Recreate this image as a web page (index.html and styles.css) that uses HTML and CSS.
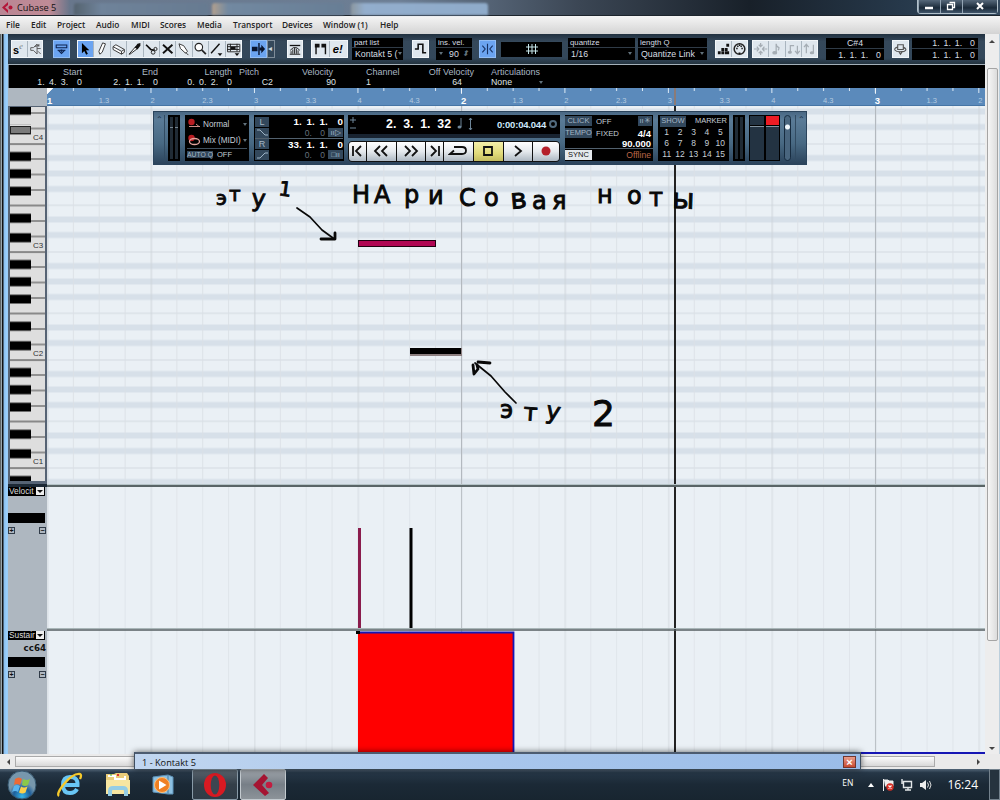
FILE: index.html
```html
<!DOCTYPE html>
<html lang="en">
<head>
    <meta charset="UTF-8">
    <title>Cubase 5</title>
    <link rel="stylesheet" href="styles.css">
</head>
<body>
<div class="desktop">
    <header class="titlebar">
        <div class="app-name">
            <svg width="13" height="13" viewBox="0 0 13 13"><path d="M7 1L1 6.500L7 12L7 9L4 6.500L7 4Z" fill="#b31538"/><circle cx="9.500" cy="6.500" r="2" fill="#b31538"/></svg>
            <span>Cubase 5</span>
        </div>
        <div class="glass-tab tab-a"></div>
        <div class="glass-tab tab-b"></div>
        <div class="glass-tab tab-c"></div>
        <div class="win-buttons">
            <span><svg width="10" height="12"><path d="M1 8h8" stroke="#fff" stroke-width="2.500"/></svg></span>
            <span><svg width="10" height="12"><path d="M3.500 2.500h5v5h-2M1.500 4.500h5v5h-5z" fill="none" stroke="#fff" stroke-width="1.300"/></svg></span>
            <span><svg width="10" height="12"><path d="M2 3l6 6M8 3l-6 6" stroke="#fff" stroke-width="2"/></svg></span>
        </div>
    </header>

    <nav class="menu">
        <span>File</span><span>Edit</span><span>Project</span><span>Audio</span><span>MIDI</span><span>Scores</span><span>Media</span><span>Transport</span><span>Devices</span><span>Window (1)</span><span>Help</span>
    </nav>

    <div class="workspace">
        <div class="frame-left"></div>
        <main class="editor">
            <div class="toolbar">
                <div class="group g-solo">
                    <svg viewBox="0 0 16 17"><text x="1" y="14" class="ico-s">s</text><text x="8" y="8" class="ico-e">e</text></svg>
                    <svg viewBox="0 0 16 17"><path d="M3 7h3l4-4v11l-4-4H3zM11 3l1 3M10 8h4M11 11l3 3M7 6l6-2" fill="none" stroke="#555"/></svg>
                </div>
                <div class="group g-info on">
                    <svg viewBox="0 0 17 17"><path d="M2.500 4h12v3h-12zM4 10h9M5 10l3.500 3.500l3.500-3.500" fill="none" stroke="#0d2350" stroke-width="1.200"/><circle cx="8.500" cy="10.500" r="1.300" fill="#0d2350"/></svg>
                </div>
                <div class="group g-tools">
                    <svg class="on" viewBox="0 0 16 17"><path d="M4 2v11l2.500-2.500l2 4l1.800-1l-2-3.700h3.500z" fill="#000"/></svg>
                    <svg viewBox="0 0 16 17"><path d="M6 14l-1-3l4-9l3 1l-3.500 9z" fill="#fff" stroke="#333"/></svg>
                    <svg viewBox="0 0 16 17"><path d="M2 6l3-2l9 5v3l-3 2l-9-5zM2 6l9 5l3-2M11 11v3" fill="#fff" stroke="#333"/></svg>
                    <svg viewBox="0 0 16 17"><path d="M2 14l7-8l2 2l-8 6z" fill="#fff" stroke="#222"/><path d="M8 7l3-4l3-1v3l-3 4z" fill="#111"/></svg>
                    <svg viewBox="0 0 16 17"><path d="M2 4l5 5l4 1" fill="none" stroke="#111" stroke-width="1.800"/><circle cx="12" cy="8.500" r="1.700" fill="none" stroke="#222"/><circle cx="9.500" cy="12" r="2" fill="none" stroke="#222"/></svg>
                    <svg viewBox="0 0 16 17"><path d="M3 4l10 9M13 4l-10 9" stroke="#111" stroke-width="2"/></svg>
                    <svg viewBox="0 0 16 17"><path d="M3 3l1.500 5l5.500 5l2-2l-4-6zM10 12l3 3" fill="#fff" stroke="#333"/></svg>
                    <svg viewBox="0 0 16 17"><circle cx="6" cy="6.500" r="4" fill="#fff" stroke="#222" stroke-width="1.200"/><path d="M9 9.500l4.500 4.500" stroke="#222" stroke-width="1.800"/></svg>
                    <svg viewBox="0 0 16 17"><path d="M2 13L11 3" stroke="#111" stroke-width="1.500"/><path d="M9 13h5l-2.500 3z" fill="#111"/></svg>
                    <svg viewBox="0 0 16 17"><path d="M1.500 3.500h13v8h-13zM1 6h13M1 9h13M4.500 3v8M11.500 3v8" fill="none" stroke="#222"/><path d="M5 6h5v3h-5zM9 13h5l-2.500 3z" fill="#111"/></svg>
                </div>
                <div class="group g-scroll on"><svg viewBox="0 0 16 17"><path d="M8.500 2v13" stroke="#08142e" stroke-width="1.500"/><path d="M1 6h6v5h-6zM9 7h2v-3l4 4.500l-4 4.500v-3h-2z" fill="#08142e"/></svg></div>
                <div class="suspend">◂</div>
                <div class="group g-score"><svg viewBox="0 0 16 17"><path d="M2 4.500h12" stroke="#111" stroke-width="1.500"/><path d="M3.500 14v-3M5.500 14v-5M7.500 14v-7M9.500 14v-6M11.500 14v-4M2 14.500h12M2.500 10l3.500-3h4l3.500 3" stroke="#222" fill="none" stroke-width="1.100"/></svg></div>
                <div class="group g-part">
                    <svg viewBox="0 0 16 17"><path d="M2 3h5v4h-3v7h-1.500v-7h-.5zM9 3h5v11h-1.500v-7h-3.500z" fill="#111"/></svg>
                    <svg viewBox="0 0 16 17"><text x="2" y="13" class="ico-edit">e!</text></svg>
                </div>
                <div class="lcd l-part"><small>part list</small><b>Kontakt 5 (<i></i></b></div>
                <div class="group g-step"><svg viewBox="0 0 16 17"><path d="M2 8.500h3.500v-5h5v9h3.500" fill="none" stroke="#111" stroke-width="1.700"/></svg></div>
                <div class="lcd l-vel"><small>ins. vel.</small><b><i></i>90<em>⬍</em></b></div>
                <div class="group g-snap on"><svg viewBox="0 0 16 17"><path d="M8 3v11M2.500 5l3 3.500l-3 3.500M13.500 5l-3 3.500l3 3.500" fill="none" stroke="#173163" stroke-width="1.200"/></svg></div>
                <div class="lcd l-grid"><svg width="14" height="12" viewBox="0 0 14 12"><path d="M3.500 1v10M7 1v10M10.500 1v10M1 4h12M1 8h12" stroke="#c6e6ea" fill="none"/></svg></div>
                <div class="lcd l-quant"><small>quantize</small><b>1/16<i></i></b></div>
                <div class="lcd l-len"><small>length Q</small><b>Quantize Link<i></i></b></div>
                <div class="group g-midi">
                    <svg viewBox="0 0 16 17"><path d="M2 11h3v3h-3zM5.700 11h3v3h-3zM5.700 7.500h3v3h-3zM9.400 11h3v3h-3zM9.400 7.500h3v3h-3zM11 3h3v3h-3zM11 11h3v3h-3z" fill="#111"/></svg>
                    <svg viewBox="0 0 16 17"><circle cx="8" cy="8.500" r="5.700" fill="none" stroke="#222" stroke-width="1.600"/><path d="M4.500 8h1.500M10 8h1.500M5.500 5.500h1.500M9 5.500h1.500M7.500 4.500h1.200M7 13h2" stroke="#111" stroke-width="1.600"/></svg>
                </div>
                <div class="group g-dim">
                    <svg viewBox="0 0 16 17"><path d="M1 8.500h4M11 8.500h4M8 2v4M8 11v4M4 6l2 2.500l-2 2.500M12 6l-2 2.500l2 2.500M6 4l2 2l2-2M6 13l2-2l2 2"/></svg>
                    <svg viewBox="0 0 16 17"><path d="M7.500 12v-9q0 3 3 4q0 2-1 3"/><ellipse cx="6" cy="12.500" rx="2" ry="1.300"/></svg>
                    <svg viewBox="0 0 16 17"><path d="M4.500 12v-7h4M12 5v8M9.500 10.500l2.500 3l2.500-3"/><ellipse cx="4" cy="12" rx="1.500" ry="1"/></svg>
                    <svg viewBox="0 0 16 17"><path d="M4.500 13v-9M2 6.500l2.500-3l2.500 3M12 4v8"/><ellipse cx="10.500" cy="12.500" rx="1.700" ry="1"/></svg>
                </div>
                <div class="lcd l-pos"><b>C#4</b><b>1. 1. 1.&nbsp; 0</b></div>
                <div class="group g-loop"><svg viewBox="0 0 16 17"><path d="M5 4h6v5h-6zM5 6.500q-4 1-3 3q2 3 10 1.500q4-2-1-4.500M6 11l2 3l2-3" fill="none" stroke="#555" stroke-width="1.200"/></svg></div>
                <div class="lcd l-range"><b>1. 1. 1.&nbsp; 0</b><b>1. 1. 1.&nbsp; 0</b></div>
            </div>

            <div class="infoline">
                <div class="i-start"><span>Start</span><b>1. 4. 3.&nbsp; 0</b></div>
                <div class="i-end"><span>End</span><b>2. 1. 1.&nbsp; 0</b></div>
                <div class="i-len"><span>Length</span><b>0. 0. 2.&nbsp; 0</b></div>
                <div class="i-pitch"><span>Pitch</span><b>C2</b></div>
                <div class="i-vel"><span>Velocity</span><b>90</b></div>
                <div class="i-chan"><span>Channel</span><b>1</b></div>
                <div class="i-off"><span>Off Velocity</span><b>64</b></div>
                <div class="i-art"><span>Articulations</span><b>None<i></i></b></div>
            </div>

            <div class="ruler">
                <div class="ruler-corner"></div>
                <div class="ruler-scale">
                    <svg class="ticks" width="938" height="18">
                        <defs><pattern id="ticks" width="103.480" height="18" patternUnits="userSpaceOnUse"><path d="M.5 0v5M26.400 0v3M52.200 0v3M78.100 0v3" stroke="#dceaf6"/></pattern></defs>
                        <rect width="938" height="18" fill="url(#ticks)"/>
                        <path d="M0 0h6l-6 6zM414.500 0v6M828.500 0v6" fill="#fff" stroke="#fff" stroke-width=".7"/>
                        <path d="M628 0v18" stroke="#8b7b77" stroke-width="2"/>
                    </svg>
                    <b>1</b><span>1.3</span><span>2</span><span>2.3</span><span>3</span><span>3.3</span><span>4</span><span>4.3</span><b>2</b><span>1.3</span><span>2</span><span>2.3</span><span>3</span><span>3.3</span><span>4</span><span>4.3</span><b>3</b><span>1.3</span><span>2</span>
                </div>
            </div>

            <div class="piano-row">
                <svg class="keys" width="39" height="379" viewBox="8 106 39 379">
                    <defs>
                        <pattern id="octave" x="10" y="143.500" width="35" height="108" patternUnits="userSpaceOnUse">
                            <rect width="35" height="108" fill="#dedede"/>
                            <path d="M0 .6h35M0 62h35" stroke="#333"/>
                            <path d="M20 15.500h15M20 31h15M20 46.500h15M20 77.500h15M20 93h15" stroke="#444"/>
                            <path d="M0 8.500h21v9h-21zM0 25.700h21v9h-21zM0 43.300h21v8.700h-21zM0 70.300h21v9h-21zM0 89.700h21v9h-21z" fill="#000"/>
                        </pattern>
                    </defs>
                    <rect x="8" y="106" width="39" height="379" fill="#566374"/>
                    <rect x="10" y="107" width="35" height="374" fill="url(#octave)"/>
                    <rect x="10" y="125" width="21" height="9" fill="#dedede"/>
                    <rect x="10.500" y="126.500" width="20" height="7" fill="#7b7b7b" stroke="#222"/>
                    <g class="key-names"><text x="33" y="140">C4</text><text x="33" y="248">C3</text><text x="33" y="356">C2</text><text x="33" y="464">C1</text></g>
                </svg>
                <svg class="notes" width="938" height="379" viewBox="47 106 938 379">
                    <defs>
                        <pattern id="rows" x="47" y="143.500" width="938" height="108" patternUnits="userSpaceOnUse">
                            <rect width="938" height="108" fill="#eaf0f5"/>
                            <path d="M0 11.500h938v6h-938zM0 27h938v6h-938zM0 42.500h938v6h-938zM0 73h938v6h-938zM0 88.500h938v6h-938z" fill="#d7e0e9"/>
                            <path d="M0 .5h938M0 61.800h938" stroke="#d3dae0"/>
                        </pattern>
                        <pattern id="beats" x="47" y="0" width="103.480" height="400" patternUnits="userSpaceOnUse">
                            <path d="M26.400 0v400M52.200 0v400M78.100 0v400" stroke="#dae0e5" stroke-width=".9"/><path d="M.9 0v400" stroke="#cdd3d9"/>
                        </pattern>
                    </defs>
                    <rect x="47" y="106" width="938" height="379" fill="url(#rows)"/>
                    <rect x="47" y="106" width="938" height="379" fill="url(#beats)"/>
                    <path d="M461.500 106v379M875.500 106v379" stroke="#b3b9bf"/>
                    <rect x="358.500" y="240.500" width="77" height="6" fill="#b10754" stroke="#210010"/>
                    <rect x="410" y="348" width="52" height="8" fill="#8c7f80"/>
                    <rect x="410" y="348" width="51" height="6" fill="#000"/>
                    <path d="M675 106v379" stroke="#222" stroke-width="2"/>
                    <g class="scribble">
                        <text class="sm" x="216 229" y="205 201">эт</text><text x="251" y="206" rotate="4">у</text><text class="sm" x="278" y="195" rotate="8">1</text>
                        <text x="352 374 404 428 459" y="203 203 203 204 206">НАриС</text><text x="484" y="206">о</text><text class="wide" x="511" y="209" rotate="-5">в</text><text x="532 552" y="209 209">ая</text>
                        <text x="597 627 649" y="203 204 206">нот</text><text class="wide" x="672" y="208" rotate="2">ы</text>
                        <text x="500 523 545" y="418 420 418" rotate="0 4 10">эту</text><text class="big" x="592" y="426">2</text>
                        <path d="M297 208l13 9l12 13l11 8M516 403l-11-11l-14-16l-16-13"/>
                        <path class="head" d="M321 239l14 0l0-6M478 362l12 1M473 365l1 9l4-5l-1-4"/>
                    </g>
                </svg>
            </div>

            <div class="splitter"></div>

            <div class="lane lane-vel">
                <div class="lane-head">
                    <div class="lane-select"><span>Velocit</span><i></i></div>
                    <div class="lane-label"></div>
                    <div class="lane-value"></div>
                    <div class="lane-pm"><span>+</span><span>−</span></div>
                </div>
                <svg width="938" height="144" viewBox="47 487 938 144">
                    <rect class="lane-bg" x="47" y="487" width="938" height="144"/>
                    <rect x="47" y="487" width="938" height="144" fill="url(#beats)" opacity=".75"/>
                    <path d="M461.500 487v144M875.500 487v144" stroke="#bcc2c7"/>
                    <path d="M359.500 528v100" stroke="#8a1c4c" stroke-width="3"/>
                    <path d="M411 528v100" stroke="#000" stroke-width="3"/>
                    <path d="M675 487v144" stroke="#222" stroke-width="2"/>
                    <path d="M47 628.500h938" stroke="#a9b6b8"/><path d="M47 630h938" stroke="#555e61" stroke-width="1.500"/>
                </svg>
            </div>
            <div class="lane lane-cc">
                <div class="lane-head">
                    <div class="lane-select"><span>Sustair</span><i></i></div>
                    <div class="lane-label">cc64</div>
                    <div class="lane-value"></div>
                    <div class="lane-pm"><span>+</span><span>−</span></div>
                </div>
                <svg width="938" height="123" viewBox="47 631 938 123">
                    <rect class="lane-bg" x="47" y="631" width="938" height="123"/>
                    <rect x="47" y="631" width="938" height="123" fill="url(#beats)" opacity=".75"/>
                    <path d="M461.500 631v123M875.500 631v123" stroke="#bcc2c7"/>
                    <rect x="358" y="632" width="155" height="122" fill="#f00"/>
                    <path d="M358 632.500h155.500v120.500h471.500" fill="none" stroke="#1616b4" stroke-width="1.800"/>
                    <rect x="356" y="631" width="4" height="3"/>
                    <path d="M675 631v121" stroke="#222" stroke-width="2"/>
                </svg>
            </div>
        </main>
        <aside class="vscroll">
            <span class="up"></span>
            <div class="vthumb"></div>
            <span class="down"></span>
        </aside>
    </div>

    <div class="hscroll"><span class="left"></span><div class="hthumb"></div><span class="right"></span></div>

    <footer class="taskbar">
        <div class="task start">
            <svg width="30" height="30" viewBox="0 0 30 30"><defs><radialGradient id="orb" cx=".5" cy=".9"><stop offset="0" stop-color="#35b5e8"/><stop offset=".6" stop-color="#1d5f9c"/><stop offset="1" stop-color="#7797ac"/></radialGradient></defs><circle cx="15" cy="15" r="14" fill="url(#orb)" stroke="#35566e"/><path d="M8 9q4-3 7 0l-2 6q-3-2-6 0z" fill="#ee6a34"/><path d="M16 9q4 2 7 0l-2 6q-3 2-6 0z" fill="#8bc84a"/><path d="M7 16q3-2 6 0l-2 6q-3-2-6 0z" fill="#59b4ee"/><path d="M14 16.500q3 2 6.500 0l-2 6q-3 2-6.500 0z" fill="#fbd04b"/></svg>
        </div>
        <div class="task">
            <svg width="26" height="26" viewBox="0 0 26 26"><path d="M20 17q-2 4-7 4q-7 0-7-8q0-8 7-8q8 0 7.500 8h-14" fill="none" stroke="#69c6f5" stroke-width="4"/><path d="M2 24q-3-2 5-12q9-11 16-10q2 1 0 5" fill="none" stroke="#f6ca2c" stroke-width="2.300"/></svg>
        </div>
        <div class="task">
            <svg width="26" height="25" viewBox="0 0 26 25"><path d="M1 5v-3h8l2-1h11l2 3v18h-23z" fill="#e9cc79"/><path d="M3 4h7v3h10v-3" stroke="#fff" fill="none" stroke-width="2"/><path d="M5 3h2" stroke="#3a3"/><path d="M12 3h2" stroke="#d33" stroke-width="2"/><path d="M1 8h24v14h-24z" fill="#f7e6a1"/><path d="M5 24v-5q0-3 3-3h10q3 0 3 3v5" fill="none" stroke="#94cde5" stroke-width="4"/></svg>
        </div>
        <div class="task">
            <svg width="24" height="22" viewBox="0 0 24 22"><path d="M2 3l15-2v19l-15-2zM17 1l5 2v17l-5 0z" fill="#8dc0e2" stroke="#5d93b9"/><circle cx="11" cy="11" r="7.500" fill="#f08022" stroke="#fbc07d"/><path d="M8 6.500v9l7.500-4.500z" fill="#fff"/></svg>
        </div>
        <div class="task boxed">
            <svg width="24" height="26" viewBox="0 0 24 26"><ellipse cx="12" cy="13" rx="11" ry="12" fill="#d81a22"/><ellipse cx="12" cy="13" rx="4.300" ry="9.500" fill="#3c4651"/></svg>
        </div>
        <div class="task boxed active">
            <svg width="24" height="24" viewBox="0 0 24 24"><path d="M13 1L2 12L14 23L18 20L11 12L17 5Z" fill="#a51432"/><circle cx="18" cy="12" r="3.300" fill="#c31c40"/></svg>
        </div>
        <div class="tray">
            <span class="lang">EN</span>
            <svg width="9" height="6"><path d="M1 5l3-4l3 4z" fill="#fff"/></svg>
            <svg width="14" height="14"><path d="M2.500 1v12M3 2h4l1 1h4v5h-8" fill="#eee" stroke="#eee"/><circle cx="9" cy="9" r="3.700" fill="#d42e24"/><path d="M7.500 7.500l3 3M10.500 7.500l-3 3" stroke="#fff" stroke-width="1.200"/></svg>
            <svg width="14" height="14"><path d="M3.500 3.500h8v6h-8zM2 1v5M5 12h6M8 9v3" fill="none" stroke="#e2e6e8" stroke-width="1.400"/></svg>
            <svg width="14" height="14"><path d="M1 5h2l4-3v10l-4-3h-2z" fill="#eee"/><path d="M8.500 4.500q2 2.500 0 5M10.500 3q3 4 0 8" fill="none" stroke="#ddd"/></svg>
            <span class="clock">16:24</span>
            <div class="show-desktop"></div>
        </div>
    </footer>

    <!-- floating windows -->
    <section class="transport">
        <div class="grip">⌃</div>
        <div class="tp meter"><i></i><i></i></div>
        <div class="tp mode">
            <div><svg width="14" height="13"><circle cx="4.500" cy="4" r="3.200" fill="#b91d22"/><path d="M2 8.500h11M9 6l3 2.500" stroke="#cf8b86" fill="none"/></svg>Normal<u></u></div>
            <div><svg width="14" height="13"><circle cx="4.500" cy="4" r="3.200" fill="#b91d22"/><ellipse cx="7.500" cy="7.500" rx="5" ry="3" stroke="#e2a39d" fill="none" stroke-width="1.300"/></svg>Mix (MIDI)<u></u></div>
            <div class="autoq"><mark>AUTO Q</mark>OFF</div>
        </div>
        <div class="tp locators">
            <div><mark>L</mark><b>1.&ensp;1.&ensp;1.&emsp;0</b></div>
            <div><mark><svg width="12" height="8"><path d="M1 1h3l5 5h3" fill="none" stroke="#9eb4c6"/></svg></mark><span>0.&emsp;0</span><mark class="punch">ıı▷</mark></div>
            <div><mark>R</mark><b>33.&ensp;1.&ensp;1.&emsp;0</b></div>
            <div><mark><svg width="12" height="8"><path d="M1 7h3l5-5h3" fill="none" stroke="#9eb4c6"/></svg></mark><span>0.&emsp;0</span><mark class="punch">□ıı</mark></div>
        </div>
        <div class="main-tp">
            <div class="tp time">
                <svg width="8" height="16"><path d="M1 4h6M4 1v6M1 12h6" stroke="#6e8699"/></svg>
                <b class="bars">2.&nbsp; 3.&nbsp; 1.&nbsp; 32</b>
                <svg class="note" width="18" height="16"><path d="M5 2v9M14.500 2v12M13 4l1.500-2l1.500 2M13 12l1.500 2l1.500-2" stroke="#6e8699" fill="none"/><ellipse cx="3.500" cy="11" rx="2" ry="1.500" fill="#6e8699"/></svg>
                <b class="secs">0:00:04.044</b><span class="clk"></span>
            </div>
            <div class="buttons">
                <span class="b1"><svg width="14" height="14"><path d="M3 2v10M11 2l-5 5l5 5"/></svg></span>
                <span class="b2"><svg width="18" height="14"><path d="M8 2l-5 5l5 5M15 2l-5 5l5 5"/></svg></span>
                <span class="b2"><svg width="18" height="14"><path d="M3 2l5 5l-5 5M10 2l5 5l-5 5"/></svg></span>
                <span class="b1"><svg width="14" height="14"><path d="M3 2l5 5l-5 5M11 2v10"/></svg></span>
                <span class="b2"><svg width="20" height="14"><path d="M6 3h8q4 0 4 3.500q0 3.500-4 3.500h-12M6 6.500l-4 3.500h5"/></svg></span>
                <span class="b2 stop"><svg width="14" height="14"><path d="M3 3h8v8h-8z"/></svg></span>
                <span class="b2"><svg width="14" height="14"><path d="M4 2l6 5l-6 5"/></svg></span>
                <span class="b1 rec"><svg width="14" height="14"><circle cx="7" cy="7" r="4.500"/></svg></span>
            </div>
        </div>
        <div class="tp tempo">
            <div><mark>CLICK</mark>OFF<mark class="end">ıı✳</mark></div>
            <div><mark>TEMPO</mark>FIXED<b>4/4</b></div>
            <div class="bpm"><b>90.000</b></div>
            <div class="sync"><mark>SYNC</mark><em>Offline</em></div>
        </div>
        <div class="tp markers">
            <div class="mk-head"><mark>SHOW</mark><span>MARKER</span></div>
            <div class="mk-grid"><span>1</span><span>2</span><span>3</span><span>4</span><span>5</span><span>6</span><span>7</span><span>8</span><span>9</span><span>10</span><span>11</span><span>12</span><span>13</span><span>14</span><span>15</span></div>
        </div>
        <div class="tp meter right-meter"><i></i><i></i></div>
        <div class="tp level"><i></i><i class="clip"></i></div>
        <div class="fader"></div>
        <div class="grip last">⌃</div>
    </section>

    <section class="kontakt"><span>1 - Kontakt 5</span><div class="close">×</div></section>
</div>
</body>
</html>
```
FILE: styles.css
```css
* {
    box-sizing: border-box;
}

body {
    margin: 0;
    font-family: "Liberation Sans", Arial, sans-serif;
    font-size: 9px;
    color: #111;
}

svg {
    display: block;
    flex: none;
}

.desktop {
    position: relative;
    width: 1000px;
    height: 800px;
    overflow: hidden;
    display: flex;
    flex-direction: column;
    background: #1d2935;
}

/* title bar */
.titlebar {
    height: 16px;
    flex: none;
    display: flex;
    background: linear-gradient(90deg, #67758a, #6d7f95 40%, #3b4654 58%, #182029 75%, #26384a 90%, #34495e);
    border-bottom: 1px solid #1d252d;
}

.app-name {
    width: 70px;
    height: 15px;
    display: flex;
    align-items: center;
    gap: 3px;
    padding-left: 1px;
    font: 9.2px "Open Sans", sans-serif;
    background: linear-gradient(90deg, #b98694, #c08b96 70%, #67758a);
}

.glass-tab {
    height: 12px;
    margin-top: 3px;
    background: #778da5;
    border-radius: 3px 3px 0 0;
    filter: blur(1px);
}

.tab-a {
    width: 134px;
    margin-left: 4px;
    background: linear-gradient(90deg, #55636f, #6f839a 20%, #677b91);
}

.tab-b {
    width: 132px;
    margin-left: 4px;
    background: linear-gradient(90deg, #b2a08e, #7289a1 12%, #687e95);
}

.tab-c {
    width: 137px;
    margin-left: 7px;
    background: linear-gradient(90deg, #8c98a0, #93aecd 10%, #8fabca);
}

.win-buttons {
    margin-left: auto;
    margin-right: 2px;
    width: 81px;
    height: 14px;
    display: flex;
    border: 1px solid #b2c0ca;
    border-top: 0;
    border-radius: 0 0 4px 4px;
}

.win-buttons span {
    flex: 22;
    display: flex;
    justify-content: center;
    background: linear-gradient(#56687a, #1b2a39 60%, #40556a);
    border-left: 1px solid #93a4b3;
}

.win-buttons span:last-child {
    flex: 36;
}

/* menu */
.menu {
    height: 18px;
    flex: none;
    display: grid;
    grid-template-columns: 25px 26px 39px 35px 29px 37px 36px 49px 41px 57px 40px;
    align-items: center;
    padding-left: 6px;
    font: 600 8.3px "Open Sans", sans-serif;
    white-space: nowrap;
    color: #222;
    background: linear-gradient(#f5f5f5, #e1e1e1 60%, #d3d3d3);
}

.menu span {
    margin-top: -2px;
}

.workspace {
    height: 720px;
    flex: none;
    display: flex;
}

.frame-left {
    width: 8px;
    background: linear-gradient(90deg, #5d6365 0 1px, #9aa7ad 1px 2px, #111 2px 3px, #8abdeb 4px, #9cd2ff 7px, #97c7ef);
}

.editor {
    width: 977px;
    display: flex;
    flex-direction: column;
}

/* toolbar */
.toolbar {
    height: 31px;
    display: flex;
    align-items: center;
    padding-left: 3px;
    background: linear-gradient(#20303f, #35485a 25%, #33475a 80%, #24333f);
    border-bottom: 1px solid #a4b0ba;
}

.group {
    height: 18px;
    flex: none;
    display: flex;
    background: #dfe7ee;
    border: 1px solid #f2f6f9;
}

.group svg {
    width: 0;
    height: 16px;
    flex: 1;
    border-right: 1px solid #a9b5bf;
}

.group svg:last-child {
    border-right: 0;
}

.on {
    background: #6ba4f1;
    border-color: #91bdf6;
}

.g-solo { width: 32px; }
.g-info { width: 17px; margin-left: 10px; }
.g-tools { width: 165px; margin-left: 7px; }
.g-scroll { width: 17px; margin-left: 8px; }
.g-score { width: 16px; margin-left: 12px; }
.g-part { width: 37px; margin-left: 8px; }
.g-step { width: 17px; margin-left: 9px; }
.g-snap { width: 17px; margin-left: 7px; }
.g-midi { width: 33px; margin-left: 8px; }
.g-dim { width: 66px; margin-left: 4px; }
.g-loop { width: 17px; margin-left: 8px; }

.g-dim path,
.g-dim ellipse {
    fill: none;
    stroke: #a5adb4;
    stroke-width: 1.3;
}

.g-dim ellipse {
    fill: #a5adb4;
}

.ico-s { font: bold 12px "Liberation Sans", sans-serif; }
.ico-e { font: italic 9px "Liberation Serif", serif; fill: #777; }
.ico-edit { font: italic bold 12px "Liberation Sans", sans-serif; }

.suspend {
    width: 8px;
    height: 18px;
    border: 1px solid #7e8c99;
    color: #cbd5dd;
    font-size: 8px;
    line-height: 16px;
}

.lcd {
    height: 22px;
    flex: none;
    display: flex;
    flex-direction: column;
    background: #000;
    color: #d7dde2;
    overflow: hidden;
    white-space: nowrap;
}

.lcd small {
    height: 10px;
    padding-left: 2px;
    font-size: 7.8px;
    line-height: 9px;
    border-bottom: 1px solid #2f3b47;
}

.lcd b {
    height: 11px;
    display: flex;
    align-items: center;
    padding: 0 3px;
    font-weight: normal;
    font-size: 8.8px;
}

.lcd i,
.infoline i,
.mode u {
    margin-left: auto;
    border: 2.5px solid transparent;
    border-top: 3px solid #61717b;
    border-bottom: 0;
}

.l-part { width: 51px; margin-left: 4px; }
.l-part i { margin-right: -2px; }
.l-vel { width: 36px; margin-left: 7px; }
.l-vel i { margin: 0 6px 0 0; }
.l-vel em { margin-left: auto; font-size: 8px; color: #61717b; }
.l-grid { width: 61px; height: 15px; margin-left: 5px; align-items: center; justify-content: center; }
.l-quant { width: 67px; margin-left: 6px; }
.l-len { width: 69px; margin-left: 3px; }
.l-pos { width: 58px; margin-left: 8px; }
.l-pos b:first-child { justify-content: center; border-bottom: 1px solid #2f3b47; }
.l-pos b:last-child { justify-content: flex-end; }
.l-range { width: 66px; margin-left: 3px; }
.l-range b { justify-content: flex-end; }
.l-range b:first-child { border-bottom: 1px solid #2f3b47; }
.l-pos b, .l-range b { word-spacing: 1.5px; }

/* info line */
.infoline {
    height: 23px;
    display: flex;
    background: #000;
    border-left: 1px solid #6a7681;
    color: #a9b7c4;
    white-space: nowrap;
}

.infoline div {
    flex: none;
    display: flex;
    flex-direction: column;
    align-items: flex-end;
    line-height: 10px;
    padding-top: 2px;
}

.infoline b {
    font-weight: normal;
    font-size: 8.8px;
    color: #dfe2e5;
    word-spacing: 2px;
}

.infoline .i-start { width: 73px; }
.infoline .i-end { width: 76px; }
.infoline .i-len { width: 74px; }
.infoline .i-pitch { width: 41px; margin-left: 7px; align-items: stretch; }
.i-pitch b { text-align: right; padding-right: 7px; }
.infoline .i-vel { width: 53px; }
.infoline .i-vel b { padding-left: 0; margin-right: -3px; }
.infoline .i-chan { width: 60px; margin-left: 33px; align-items: flex-start; }
.infoline .i-off { width: 48px; }
.i-off b { padding-right: 12px; }
.infoline .i-art { width: 52px; margin-left: 17px; align-items: stretch; }
.i-art b { display: flex; align-items: center; }

/* ruler */
.ruler {
    height: 18px;
    display: flex;
}

.ruler-corner {
    width: 39px;
    background: #aeb7c0;
}

.ruler-scale {
    position: relative;
    width: 938px;
    display: flex;
    align-items: flex-end;
    overflow: hidden;
    background: #5b8abb;
    border-bottom: 1px solid #4675a5;
    font-size: 7.5px;
    line-height: 8px;
    color: #b5cbe0;
}

.ruler-scale .ticks {
    position: absolute;
    left: 0;
    top: 0;
}

.ruler-scale span,
.ruler-scale b {
    width: 51.74px;
    flex: none;
}

.ruler-scale b {
    font-size: 9.5px;
    color: #fff;
}

.piano-row {
    display: flex;
    height: 378px;
    overflow: hidden;
}

.key-names {
    font-size: 8px;
    fill: #333;
}

.scribble {
    font: 24px "DejaVu Sans", sans-serif;
    fill: #080808;
    stroke: #080808;
    stroke-width: .9;
}

.scribble .sm {
    font-size: 20px;
}

.scribble .wide {
    font-size: 28px;
}

.scribble .big {
    font-size: 36px;
}

.scribble path {
    fill: none;
    stroke-width: 1.7;
    stroke-linecap: round;
    stroke-linejoin: round;
}

.scribble .head {
    stroke-width: 2.8;
}

.splitter {
    height: 3px;
    margin-left: 39px;
    background: linear-gradient(#b5c3c7 0 1px, #596466 1px 3px);
}

.lane {
    display: flex;
    background: #aeb7c0;
}

.lane-vel { height: 144px; }
.lane-cc { height: 123px; }
.lane-bg { fill: #eaf0f5; }

.lane-head {
    width: 39px;
}

.lane-select {
    height: 9px;
    width: 37px;
    display: flex;
    background: #000;
    color: #ddd;
    line-height: 9px;
}

.lane-select span {
    width: 28px;
    padding-left: 1px;
    font-size: 8.3px;
}

.lane-select i {
    width: 8px;
    height: 8px;
    background: #eee;
}

.lane-select i::after {
    content: "";
    display: block;
    margin: 3px 1px;
    border: 3px solid transparent;
    border-top-color: #111;
}

.lane-label {
    height: 17px;
    padding: 3px 1px 0 0;
    text-align: right;
    font: bold 8.7px "DejaVu Sans", sans-serif;
}

.lane-value {
    width: 37px;
    height: 10px;
    background: #000;
}

.lane-pm {
    width: 38px;
    margin-top: 4px;
    display: flex;
    justify-content: space-between;
}

.lane-pm span {
    width: 7px;
    height: 7px;
    border: 1px solid #303b48;
    font: bold 7px/5px "Liberation Sans", sans-serif;
    text-align: center;
}

/* scrollbars */
.vscroll {
    width: 15px;
    display: flex;
    flex-direction: column;
    align-items: center;
    background: #ededed;
    border-right: 1px solid #bccfdc;
}

.vscroll span,
.hscroll span {
    border: 3px solid transparent;
}

.vscroll .up { border-bottom-color: #444; margin-top: 3px; }
.vscroll .down { border-top-color: #444; margin-top: auto; margin-bottom: 1px; }

.vthumb {
    width: 11px;
    height: 573px;
    margin-top: 25px;
    border: 1px solid #a5a5a5;
    border-radius: 2px;
    background: linear-gradient(90deg, #f6f6f6, #dcdcdc);
}

.hscroll {
    height: 15px;
    flex: none;
    display: flex;
    align-items: center;
    background: #eaeaea;
}

.hscroll .left { border-right-color: #444; margin-left: 4px; }
.hscroll .right { border-left-color: #444; margin-left: 42px; }

.hthumb {
    width: 920px;
    height: 11px;
    margin-left: 5px;
    border: 1px solid #aaa;
    background: linear-gradient(#fbfbfb, #d8d8d8);
}

/* taskbar */
.taskbar {
    height: 31px;
    flex: none;
    display: flex;
    background: linear-gradient(#526577, #263747 12%, #1b2936 50%, #182530);
}

.task {
    width: 48px;
    display: flex;
    align-items: center;
    justify-content: center;
}

.task.start {
    width: 43px;
}

.task.start + .task {
    width: 53px;
}

.task.start + .task + .task {
    width: 43px;
}

.task.boxed {
    width: 46px;
    margin-left: 5px;
    border: 1px solid #899ba8;
    border-radius: 2px;
    background: linear-gradient(#5a6670, #343f49 50%, #303c47);
}

.task.active {
    width: 46px;
    margin-left: 2px;
    background: linear-gradient(#a1a7ad, #777f87 50%, #8c9399);
    border-color: #c3cacf;
}

.tray {
    margin-left: auto;
    display: flex;
    align-items: center;
    gap: 5px;
    color: #fff;
    font-family: "Open Sans", sans-serif;
}

.lang {
    font-size: 8.5px;
    margin: 0 9px 4px 0;
}

.clock {
    font-size: 12px;
    margin-left: 9px;
    margin-right: 6px;
}

.show-desktop {
    width: 11px;
    height: 31px;
    border: 1px solid #73818c;
    background: #26333e;
}

/* transport panel */
.transport {
    position: absolute;
    left: 153px;
    top: 111px;
    width: 654px;
    height: 54px;
    display: flex;
    align-items: center;
    background: linear-gradient(#496783, #5a7b97 15%, #486983 60%, #2b435b);
    border: 1px solid #2b445c;
    color: #c5ced6;
    font-size: 8.5px;
    white-space: nowrap;
}

.grip {
    width: 11px;
    height: 46px;
    line-height: 10px;
    font-size: 8px;
    text-align: center;
    color: #182e42;
    border-right: 1px solid #314b62;
}

.grip.last {
    border-right: 0;
    border-left: 1px solid #314b62;
    margin-left: 4px;
}

.tp {
    height: 46px;
    flex: none;
    background: #000;
}

.tp mark {
    background: #33485c;
    color: #a5b7c6;
}

.meter {
    width: 12px;
    margin-left: 3px;
    display: flex;
    gap: 2px;
    padding: 2px;
}

.meter i {
    flex: 1;
    background: linear-gradient(#202b35 0 10px, #758490 10px 11px, #202b35 11px);
}

.right-meter {
    margin-left: 4px;
}

.right-meter i {
    background: #202b35;
}

.mode {
    width: 64px;
    margin-left: 5px;
    padding: 1px 2px;
}

.mode div {
    height: 16px;
    display: flex;
    align-items: center;
    gap: 2px;
    font-size: 8.2px;
}

.mode .autoq {
    height: 12px;
    gap: 4px;
    border-top: 1px solid #40505e;
    font-size: 7.5px;
}

.autoq mark {
    width: 26px;
    font-size: 6.8px;
    text-align: center;
}

.locators {
    width: 90px;
    margin-left: 5px;
    padding: 1px;
}

.locators div {
    height: 11px;
    display: flex;
    align-items: center;
    justify-content: flex-end;
    color: #65717c;
}

.locators div:nth-child(3) {
    border-top: 1px solid #52616e;
}

.locators mark:first-child {
    width: 14px;
    height: 10px;
    margin-right: auto;
    display: flex;
    align-items: center;
    justify-content: center;
    font-size: 9px;
}

.locators b {
    color: #fff;
    font-size: 9.8px;
}

.locators .punch {
    width: 15px;
    margin-left: 3px;
    font-size: 7.5px;
    line-height: 9px;
    text-align: center;
}

.main-tp {
    width: 212px;
    margin-left: 4px;
}

.time {
    height: 23px;
    display: flex;
    align-items: center;
    padding: 0 3px 0 1px;
    margin-bottom: 3px;
    border-bottom: 4px solid #182330;
}

.bars {
    width: 94px;
    text-align: right;
    font-size: 12.3px;
    color: #fff;
}

.note {
    margin-left: 5px;
}

.secs {
    margin-left: auto;
    font-size: 9.5px;
    letter-spacing: -.2px;
    color: #cee7fa;
}

.clk {
    width: 8px;
    height: 8px;
    margin-left: 3px;
    border: 2px solid #516a7d;
    border-radius: 50%;
}

.buttons {
    height: 21px;
    display: flex;
    border: 1px solid #111;
    background: #111;
    border-radius: 4px;
    overflow: hidden;
    gap: 1px;
}

.buttons span {
    display: flex;
    align-items: center;
    justify-content: center;
    background: linear-gradient(#fff, #e5e9ed 50%, #aeb9c3);
}

.buttons .b1 { flex: 17; }
.buttons .b2 { flex: 29; }
.buttons .rec { flex: 26; }
.buttons .stop { background: linear-gradient(#f4efaa, #e1da7a 60%, #c4bd60); }

.buttons path {
    fill: none;
    stroke: #111;
    stroke-width: 1.8;
}

.buttons circle {
    fill: #b5202a;
}

.tempo {
    width: 88px;
    margin-left: 5px;
    font-size: 7.8px;
}

.tempo div {
    height: 12px;
    display: flex;
    align-items: center;
}

.tempo mark {
    width: 27px;
    margin-right: 4px;
    font-size: 7.5px;
    text-align: center;
    line-height: 10px;
}

.tempo .end {
    width: 14px;
    margin: 0 1px 0 auto;
}

.tempo b {
    margin-left: auto;
    padding-right: 2px;
    font-size: 9.5px;
    color: #fff;
}

.tempo .bpm {
    height: 10px;
    border-bottom: 1px solid #52616e;
}

.tempo .sync mark {
    background: #e5e9ed;
    color: #111;
}

.tempo em {
    margin-left: auto;
    padding-right: 2px;
    font-style: normal;
    font-size: 8.6px;
    color: #bd6647;
}

.markers {
    width: 71px;
    margin-left: 5px;
    padding: 1px 2px;
}

.mk-head {
    height: 11px;
    display: flex;
    justify-content: space-between;
    font-size: 7.5px;
}

.mk-head mark {
    width: 26px;
    text-align: center;
}

.mk-grid {
    display: grid;
    grid-template-columns: repeat(5, 1fr);
    line-height: 11px;
    text-align: center;
}

.level {
    width: 31px;
    margin-left: 4px;
    display: flex;
    gap: 2px;
    padding: 1px;
}

.level i {
    flex: 1;
    background: linear-gradient(#233342 0 9px, #000 9px 10px, #8394a1 10px 11px, #233342 11px);
}

.level .clip {
    background: linear-gradient(#ed1c24 0 9px, #000 9px 10px, #8394a1 10px 11px, #233342 11px);
}

.fader {
    width: 7px;
    height: 46px;
    margin-left: 4px;
    border: 1px solid #172c40;
    border-radius: 4px;
    background: radial-gradient(circle at 50% 11px, #eff6fb 2px, #49657e 3px);
}

/* kontakt window */
.kontakt {
    position: absolute;
    left: 134px;
    top: 752px;
    width: 727px;
    height: 17px;
    display: flex;
    align-items: center;
    padding: 1px 4px 0 7px;
    border: 1px solid #3e4e60;
    border-top: 2px solid #4d5c70;
    border-bottom: 0;
    box-shadow: 0 0 6px rgba(0, 0, 0, .6);
    background: linear-gradient(90deg, #c1d6f0, #a8c6ec 50%, #9abce8);
    font: 9.2px "Open Sans", sans-serif;
}

.kontakt .close {
    width: 13px;
    height: 12px;
    margin-left: auto;
    border: 1px solid #71362f;
    background: linear-gradient(#eb9d8b, #c84a31);
    color: #fff;
    font: bold 11px/10px "Liberation Sans", sans-serif;
    text-align: center;
}
```
